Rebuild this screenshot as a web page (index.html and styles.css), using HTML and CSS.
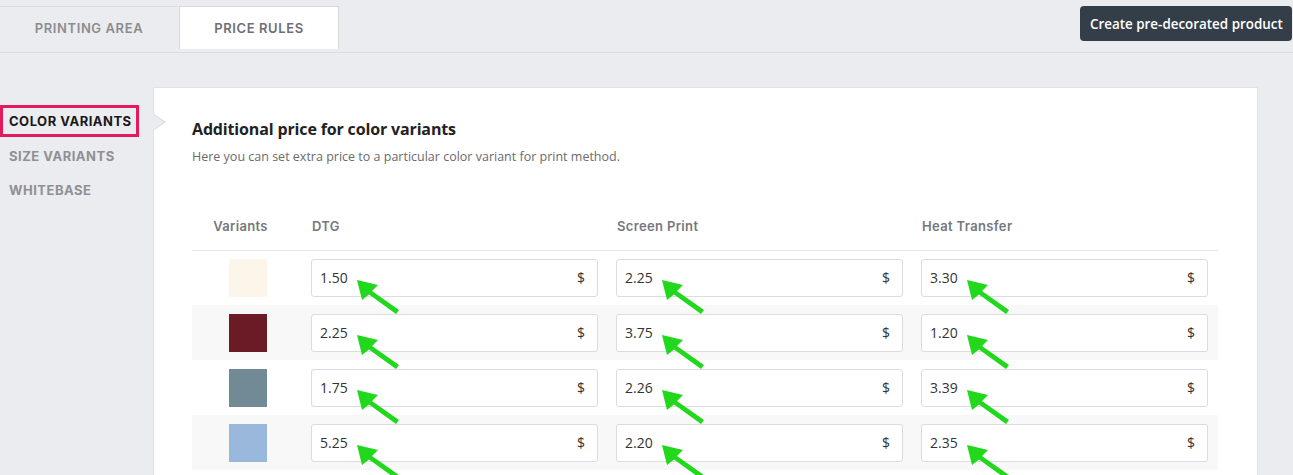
FILE: index.html
```html
<!DOCTYPE html>
<html>
<head>
<meta charset="utf-8">
<link rel="stylesheet" href="styles.css">
</head>
<body>
<div class="topbar">
  <div class="tabs">
    <div class="tab">PRINTING AREA</div>
    <div class="tab active">PRICE RULES</div>
  </div>
  <button class="create">Create pre-decorated product</button>
</div>
<div class="main">
  <nav class="side">
    <div class="side-item active">COLOR VARIANTS</div>
    <div class="side-item">SIZE VARIANTS</div>
    <div class="side-item">WHITEBASE</div>
  </nav>
  <section class="card">
    <h2 class="title">Additional price for color variants</h2>
    <p class="subtitle">Here you can set extra price to a particular color variant for print method.</p>
    <table class="prices">
      <thead>
        <tr>
          <th class="c-var">Variants</th>
          <th>DTG</th>
          <th>Screen Print</th>
          <th>Heat Transfer</th>
        </tr>
      </thead>
      <tbody>
        <tr>
          <td class="c-var"><span class="swatch cream"></span></td>
          <td><div class="field"><span class="val">1.50<svg class="arrow" viewBox="0 0 46 38"><polygon points="1,1 6,21 13,15.5 40,35 43,31 16,12 22,6"/></svg></span><span class="cur">$</span></div></td>
          <td><div class="field"><span class="val">2.25<svg class="arrow" viewBox="0 0 46 38"><polygon points="1,1 6,21 13,15.5 40,35 43,31 16,12 22,6"/></svg></span><span class="cur">$</span></div></td>
          <td><div class="field"><span class="val">3.30<svg class="arrow" viewBox="0 0 46 38"><polygon points="1,1 6,21 13,15.5 40,35 43,31 16,12 22,6"/></svg></span><span class="cur">$</span></div></td>
        </tr>
        <tr>
          <td class="c-var"><span class="swatch maroon"></span></td>
          <td><div class="field"><span class="val">2.25<svg class="arrow" viewBox="0 0 46 38"><polygon points="1,1 6,21 13,15.5 40,35 43,31 16,12 22,6"/></svg></span><span class="cur">$</span></div></td>
          <td><div class="field"><span class="val">3.75<svg class="arrow" viewBox="0 0 46 38"><polygon points="1,1 6,21 13,15.5 40,35 43,31 16,12 22,6"/></svg></span><span class="cur">$</span></div></td>
          <td><div class="field"><span class="val">1.20<svg class="arrow" viewBox="0 0 46 38"><polygon points="1,1 6,21 13,15.5 40,35 43,31 16,12 22,6"/></svg></span><span class="cur">$</span></div></td>
        </tr>
        <tr>
          <td class="c-var"><span class="swatch slate"></span></td>
          <td><div class="field"><span class="val">1.75<svg class="arrow" viewBox="0 0 46 38"><polygon points="1,1 6,21 13,15.5 40,35 43,31 16,12 22,6"/></svg></span><span class="cur">$</span></div></td>
          <td><div class="field"><span class="val">2.26<svg class="arrow" viewBox="0 0 46 38"><polygon points="1,1 6,21 13,15.5 40,35 43,31 16,12 22,6"/></svg></span><span class="cur">$</span></div></td>
          <td><div class="field"><span class="val">3.39<svg class="arrow" viewBox="0 0 46 38"><polygon points="1,1 6,21 13,15.5 40,35 43,31 16,12 22,6"/></svg></span><span class="cur">$</span></div></td>
        </tr>
        <tr>
          <td class="c-var"><span class="swatch sky"></span></td>
          <td><div class="field"><span class="val">5.25<svg class="arrow" viewBox="0 0 46 38"><polygon points="1,1 6,21 13,15.5 40,35 43,31 16,12 22,6"/></svg></span><span class="cur">$</span></div></td>
          <td><div class="field"><span class="val">2.20<svg class="arrow" viewBox="0 0 46 38"><polygon points="1,1 6,21 13,15.5 40,35 43,31 16,12 22,6"/></svg></span><span class="cur">$</span></div></td>
          <td><div class="field"><span class="val">2.35<svg class="arrow" viewBox="0 0 46 38"><polygon points="1,1 6,21 13,15.5 40,35 43,31 16,12 22,6"/></svg></span><span class="cur">$</span></div></td>
        </tr>
      </tbody>
    </table>
  </section>
</div>
</body>
</html>
```

FILE: styles.css
```css
* { box-sizing: border-box; }
html, body { margin: 0; padding: 0; }
body {
  background: #ebecef;
  font-family: "Open Sans", "Liberation Sans", sans-serif;
  overflow: hidden;
  height: 475px;
}

.topbar {
  display: flex;
  justify-content: space-between;
  align-items: flex-start;
  height: 53px;
  border-bottom: 1px solid #dadbde;
}
.tabs {
  display: flex;
  margin-top: 6px;
}
.tab {
  width: 178px;
  height: 43px;
  display: flex;
  align-items: center;
  justify-content: center;
  border-top: 1px solid #d9dadd;
  font-family: "Inter", sans-serif;
  font-weight: 600;
  font-size: 13px;
  letter-spacing: 0.6px;
  color: #8b8c90;
}
.tab.active {
  width: 160px;
  margin-left: 1px;
  background: #fff;
  border: 1px solid #d9d9d9;
  border-bottom: none;
  color: #6f7074;
}
.create {
  margin-top: 6px;
  margin-right: 1px;
  width: 212px;
  height: 35px;
  background: #343e48;
  color: #fff;
  border: none;
  border-radius: 4px;
  font-family: "Open Sans", sans-serif;
  font-weight: 600;
  font-size: 13.4px;
  padding: 0 0 0 10px;
  text-align: left;
  white-space: nowrap;
}

.main {
  display: flex;
  align-items: flex-start;
}
.side {
  width: 153px;
  flex: none;
  padding-top: 52px;
}
.side-item {
  height: 34px;
  display: flex;
  align-items: center;
  padding-left: 9px;
  font-family: "Inter", sans-serif;
  font-weight: 700;
  font-size: 13px;
  letter-spacing: 0.5px;
  color: #8e9095;
}
.side-item.active {
  width: 139px;
  height: 32px;
  margin-bottom: 2px;
  padding-left: 6px;
  border: 3px solid #e5195e;
  color: #17181a;
}

.card {
  position: relative;
  flex: none;
  width: 1105px;
  height: 388px;
  margin-top: 34px;
  background: #fff;
  border: 1px solid #e0e1e4;
  border-bottom: none;
  padding: 30px 39px 0 38px;
}
.card::before {
  content: "";
  position: absolute;
  left: -1px;
  top: 25px;
  border-left: 13px solid #dcdde0;
  border-top: 9px solid transparent;
  border-bottom: 9px solid transparent;
}
.card::after {
  content: "";
  position: absolute;
  left: -1px;
  top: 26px;
  border-left: 11px solid #ebecef;
  border-top: 8px solid transparent;
  border-bottom: 8px solid transparent;
}

.title {
  margin: 0;
  font-size: 16px;
  font-weight: 700;
  letter-spacing: -0.15px;
  color: #222;
  line-height: 22px;
}
.subtitle {
  margin: 8px 0 0;
  font-size: 12.5px;
  color: #6b6b6b;
  line-height: 18px;
}

.prices {
  margin-top: 40px;
  width: 1026px;
  border-collapse: collapse;
  table-layout: fixed;
}
.prices th {
  height: 44px;
  text-align: left;
  padding: 0 0 4px 9px;
  font-family: "Inter", sans-serif;
  font-weight: 600;
  font-size: 13px;
  letter-spacing: 0.35px;
  color: #76787e;
  border-bottom: 1px solid #e6e6e6;
  width: 305px;
}
.prices th.c-var {
  width: 111px;
  text-align: center;
  padding: 0 14px 4px 0;
}
.prices td {
  height: 55px;
  padding: 0 10px 0 8px;
  vertical-align: middle;
}
.prices td.c-var {
  text-align: center;
  padding: 0;
}
.prices tbody tr:nth-child(even) td {
  background: #f8f8f8;
}
.swatch {
  display: inline-block;
  width: 38px;
  height: 38px;
  vertical-align: middle;
}
.swatch.cream { background: #fcf5ea; }
.swatch.maroon { background: #6a1b26; }
.swatch.slate { background: #728a95; }
.swatch.sky { background: #9ab8dc; }

.field {
  display: flex;
  justify-content: space-between;
  align-items: center;
  height: 38px;
  background: #fff;
  border: 1px solid #dcdcdc;
  border-radius: 3px;
  padding: 0 12px 0 8px;
  font-size: 14px;
  color: #333;
}
.val {
  position: relative;
  line-height: 19px;
}
.arrow {
  position: absolute;
  left: calc(100% + 8px);
  top: 11px;
  width: 46px;
  height: 38px;
  z-index: 2;
  overflow: visible;
}
.arrow polygon {
  fill: #22d81c;
}
.cur {
  line-height: 19px;
}
```
